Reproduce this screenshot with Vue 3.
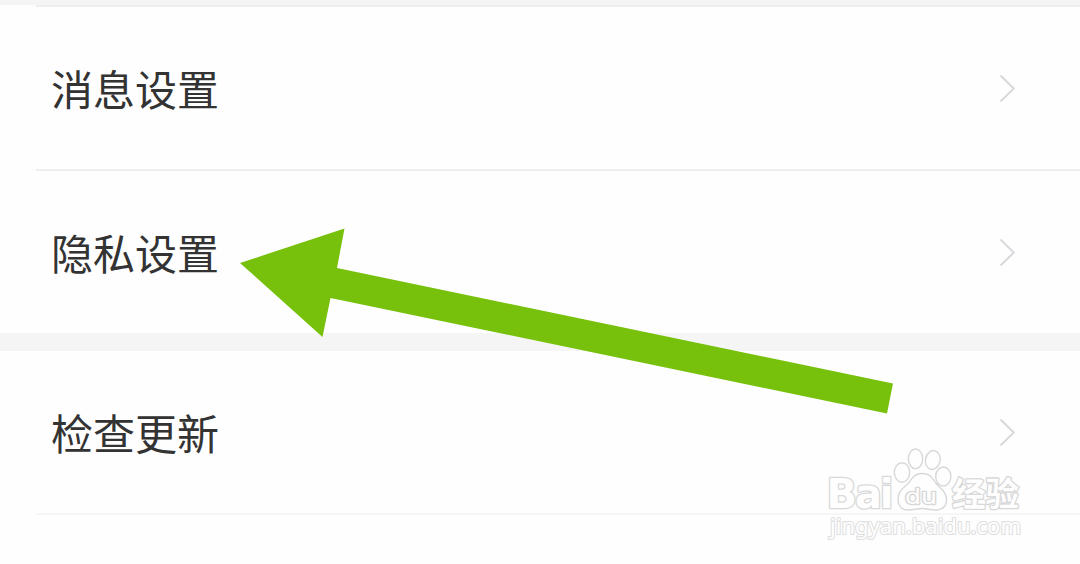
<script setup>
const groups = [
  { name: 'general', items: ['消息设置', '隐私设置'] },
  { name: 'about', items: ['检查更新'] }
]
</script>

<template>
  <div class="settings-page">
    <div v-for="group in groups" :key="group.name" class="group" :class="group.name">
      <div v-for="item in group.items" :key="item" class="row">
        <span class="label">{{ item }}</span>
        <svg class="chevron" width="18" height="30" viewBox="0 0 18 30">
          <path d="M2.500 1.500L15.800 14.500L2.500 27.500" />
        </svg>
      </div>
    </div>
    <div class="next-row"></div>

    <!-- 箭头标注 -->
    <svg class="arrow" width="1080" height="564" viewBox="0 0 1080 564">
      <polygon points="240,263 344.5,228.5 337,268 893,383.5 887,413.5 330.5,298 322.5,337" />
    </svg>

    <!-- 水印 -->
    <svg class="watermark" width="220" height="110" viewBox="820 440 220 110">
      <g class="outline">
        <text class="latin" x="826.5" y="507.5" textLength="67" lengthAdjust="spacing">Bai</text>
        <ellipse cx="902" cy="472.5" rx="7.7" ry="9.7" />
        <ellipse cx="915.5" cy="458.8" rx="7.2" ry="9.8" />
        <ellipse cx="932.8" cy="460" rx="7.3" ry="9.5" transform="rotate(12 932.8 460)" />
        <ellipse cx="943.3" cy="476.5" rx="7.6" ry="9.5" />
        <path d="M922 473.5C912 473.5 911 482 906 485.5C900 490 898 494 898 499C898 507 903 510.5 909 510C914 509.5 918 508.5 922 508.5C927 508.5 931 510.5 937 510C943 509.5 946.5 505.5 946.5 499.5C946.5 493 942 489.5 938 485.5C933 480.5 932 473.5 922 473.5Z" />
        <text class="du" x="905" y="503.5" textLength="32" lengthAdjust="spacingAndGlyphs">du</text>
        <text class="cjk" x="952" y="505.5" textLength="67" lengthAdjust="spacingAndGlyphs">经验</text>
      </g>
      <text class="url" x="830" y="534" textLength="191" lengthAdjust="spacingAndGlyphs">jingyan.baidu.com</text>
    </svg>
  </div>
</template>

<style>
body {
  margin: 0;
}
</style>

<style scoped>
.settings-page {
  position: relative;
  height: 564px;
  box-sizing: border-box;
  padding-top: 5px;
  overflow: hidden;
  background: #f5f5f5;
  font-family: "Noto Sans CJK SC", sans-serif;
}

.group {
  background: #fefefe;
}

.group.general {
  margin-bottom: 18px;
}

.row {
  height: 164px;
  box-sizing: border-box;
  display: flex;
  align-items: center;
  justify-content: space-between;
  padding: 4px 64px 0 51px;
  background: linear-gradient(#eee, #eee) 36px 0 / 100% 2px no-repeat;
}

.about .row {
  height: 162px;
  padding-top: 2px;
  background: none;
}

.label {
  color: #333;
  font-size: 42px;
  line-height: 60px;
  margin-top: -2px;
}

.chevron {
  fill: none;
  stroke: #d8d9dc;
  stroke-width: 2;
}

.next-row {
  height: 51px;
  background: linear-gradient(#f6f6f6, #f6f6f6) 36px 0 / 100% 2px no-repeat #fefefe;
}

.arrow {
  position: absolute;
  left: 0;
  top: 0;
  fill: #77c10c;
}

.watermark {
  position: absolute;
  left: 820px;
  top: 440px;
}

.outline {
  fill: #fefefe;
  stroke: #d8d8d8;
  stroke-width: 1.4;
}

.outline text {
  paint-order: stroke;
  stroke-width: 2.6;
  stroke-linejoin: round;
}

.latin {
  font-family: "DejaVu Sans", sans-serif;
  font-size: 40px;
  font-weight: bold;
}

.du {
  font-family: "DejaVu Sans", sans-serif;
  font-size: 21px;
}

.cjk {
  font-size: 33px;
  font-weight: 700;
}

.url {
  font-family: "Noto Sans", sans-serif;
  font-size: 22.5px;
  fill: #fefefe;
  stroke: #e0e0e0;
  stroke-width: 2.2;
  stroke-linejoin: round;
  paint-order: stroke;
}
</style>
